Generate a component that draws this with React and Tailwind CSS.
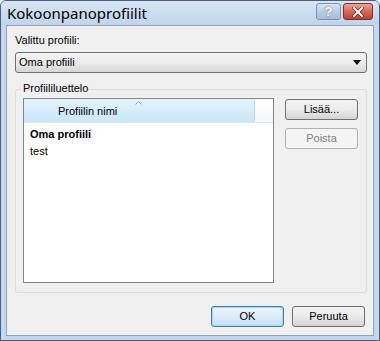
import React from 'react';

function Btn({ children, primary, disabled, className = '' }) {
  let tone = 'border-[#707070] text-black bg-gradient-to-b from-[#f3f3f3] via-[#ebebeb] to-[#d4d4d4]';
  if (primary) tone = 'border-[#3c7fb1] text-black bg-gradient-to-b from-[#eaf6fd] via-[#dcecf8] to-[#c4e0f4] shadow-[inset_0_0_0_1px_#a6d6f5]';
  if (disabled) tone = 'border-[#adb2b5] text-[#838383] bg-[#f4f4f4]';
  return (
    <div className={`h-[21px] w-[73px] rounded-[3px] border flex items-center justify-center ${tone} ${className}`}>
      {children}
    </div>
  );
}

export default function App() {
  return (
    <div className="w-[380px] h-[341px] flex flex-col bg-[#c4d8ed] border border-[#4b6078] rounded-t-[6px] overflow-hidden text-[11px] text-black font-['Liberation_Sans',Arial,sans-serif]">
      <div className="h-[24px] flex pl-[6px] pr-[6px] bg-gradient-to-b from-[#d9e6f4] to-[#bfd5ec]">
        <span className="flex-1 text-[15px] leading-[24px] font-['Noto_Sans',sans-serif]">Kokoonpanoprofiilit</span>
        <div className="flex gap-[2px] mt-[2px]">
          <div className="w-[25px] h-[17px] rounded-[3px] border border-[#7b93ae] bg-gradient-to-b from-[#d8e5f2] via-[#b9cde2] to-[#a6bed8] flex items-center justify-center text-white text-[13px] font-bold leading-none [text-shadow:0_0_2px_#4b6078]">?</div>
          <div className="w-[30px] h-[17px] rounded-[3px] border border-[#8a2a22] bg-gradient-to-b from-[#e8a493] via-[#d56b57] to-[#c4402c] flex items-center justify-center">
            <svg width="12" height="10" viewBox="0 0 12 10">
              <path d="M2 1 L10 9 M10 1 L2 9" stroke="#5a1a12" strokeWidth="3.2" strokeLinecap="square" />
              <path d="M2 1 L10 9 M10 1 L2 9" stroke="#ffffff" strokeWidth="2" strokeLinecap="square" />
            </svg>
          </div>
        </div>
      </div>

      <div className="flex-1 mx-[5px] mb-[4px] border border-[#8fa5be] bg-[#f0f0f0] flex flex-col pl-[8px] pr-[6px] pt-[7px]">
        <div className="leading-[15px]">Valittu profiili:</div>
        <div className="mt-[4px] h-[21px] rounded-[3px] border border-[#707070] bg-gradient-to-b from-[#f3f3f3] via-[#ebebeb] to-[#d6d6d6] flex items-center pl-[3px] pr-[5px]">
          <span className="flex-1">Oma profiili</span>
          <svg width="8" height="5" viewBox="0 0 8 5"><path d="M0 0 H8 L4 5 Z" fill="#000" /></svg>
        </div>

        <div className="relative mt-[16px] h-[204px] border border-[#d5dfe5] rounded-[3px] flex pl-[7px] pr-[8px] pt-[8px] pb-[9px] gap-[11px]">
          <span className="absolute -top-[9px] left-[5px] px-[2px] bg-[#f0f0f0] leading-[15px]">Profiililuettelo</span>
          <div className="w-[251px] border border-[#828790] bg-white flex flex-col">
            <div className="h-[24px] flex border-b border-[#d5e6f2]">
              <div className="relative w-[231px] border-r border-[#c0d9ea] bg-gradient-to-b from-[#e3f3fc] to-[#c9e7f9] flex items-center pl-[34px] pt-[2px]">
                Profiilin nimi
                <svg className="absolute left-[111px] top-[2px]" width="7" height="4" viewBox="0 0 7 4">
                  <path d="M0.5 3.5 L3.5 0.5 L6.5 3.5" stroke="#97a8b8" strokeWidth="1" fill="none" />
                </svg>
              </div>
              <div className="flex-1 bg-gradient-to-b from-[#ffffff] to-[#f4f6f8]" />
            </div>
            <div className="pl-[6px] pt-[3px] leading-[17px]">
              <div className="font-bold">Oma profiili</div>
              <div>test</div>
            </div>
          </div>
          <div className="flex flex-col gap-[8px] pt-[1px]">
            <Btn>Lisää...</Btn>
            <Btn disabled>Poista</Btn>
          </div>
        </div>

        <div className="mt-[13px] flex justify-end gap-[8px] pr-[2px]">
          <Btn primary>OK</Btn>
          <Btn>Peruuta</Btn>
        </div>
      </div>
    </div>
  );
}
